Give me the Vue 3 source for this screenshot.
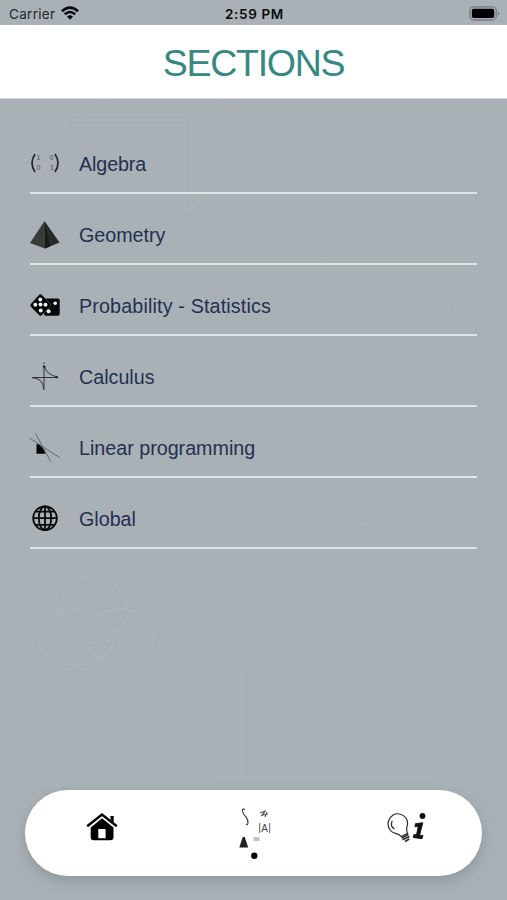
<script setup>
const sections = [
  { id: 'algebra', label: 'Algebra' },
  { id: 'geometry', label: 'Geometry' },
  { id: 'probability', label: 'Probability - Statistics' },
  { id: 'calculus', label: 'Calculus' },
  { id: 'linear', label: 'Linear programming' },
  { id: 'global', label: 'Global' },
]
</script>

<template>
  <div class="screen">
    <svg class="backdrop" viewBox="0 0 507 900" fill="none" stroke="#acb5b6" stroke-width="1.800">
      <path d="M66 120H185V212H66ZM66 120L110 99M185 120L230 99V178L185 212" opacity=".7" />
      <path d="M278 178V318M278 200L460 318M322 212V314H470M322 258L455 228V314" opacity=".3" />
      <path d="M105 380V430M260 525H465M360 460V600M290 570Q360 480 440 565" opacity=".4" />
      <circle cx="94" cy="610" r="33.500" />
      <ellipse cx="76" cy="637" rx="38" ry="28" />
      <ellipse cx="120" cy="637" rx="34" ry="28" />
      <path d="M241 672V780M238 675L241 669L244 675M210 779H488M482 777L487 779L482 781" opacity=".8" />
      <path d="M440 702H462M418 728H430" opacity=".6" />
    </svg>

    <header class="status">
      <div class="carrier">
        <span>Carrier</span>
        <svg class="wifi" viewBox="0 0 18 14">
          <g fill="none" stroke="#080b0d" stroke-width="2.500">
            <path d="M.9 5.200Q9-2 17.100 5.200" />
            <path d="M3.800 8.300Q9 3.700 14.200 8.300" />
          </g>
          <path d="M6 10.500Q9 7.900 12 10.500L9 13.700Z" fill="#080b0d" />
        </svg>
      </div>
      <span class="time">2:59 PM</span>
      <svg class="battery" viewBox="0 0 31 15">
        <rect x=".8" y=".8" width="26.400" height="13.200" rx="3.800" fill="none" stroke="#757d82" stroke-width="1.300" />
        <rect x="2.800" y="2.700" width="22.400" height="9.400" rx="1.800" fill="#000" />
        <path d="M28.700 5Q32 7.400 28.700 9.800Z" fill="#757d82" />
      </svg>
    </header>

    <div class="titlebar"><h1>SECTIONS</h1></div>

    <ul class="list">
      <li v-for="s in sections" :key="s.id" class="row">
        <svg v-if="s.id === 'algebra'" class="icon" viewBox="0 0 30 30">
          <g fill="none" stroke="#24282b" stroke-width="1.700">
            <path d="M5 5Q-1 14 5 23M25 5Q31 14 25 23" />
          </g>
          <g class="digits"><text x="6.500" y="11">1</text><text x="19.500" y="11">0</text><text x="6.500" y="20.700">0</text><text x="20" y="20.700">1</text></g>
        </svg>
        <svg v-else-if="s.id === 'geometry'" class="icon" viewBox="0 0 30 30">
          <path d="M14.500 1L0 23L15 28.500Z" fill="#393b3b" />
          <path d="M14.500 1L29.500 22.500L15 28.500Z" fill="#292b2b" />
          <path d="M14.500 1L20 26.500L15 28.500Z" fill="#181a1a" />
        </svg>
        <svg v-else-if="s.id === 'probability'" class="icon" viewBox="0 0 30 30">
          <rect x="14" y="7.500" width="15.700" height="17.300" rx="1.800" fill="#070808" />
          <path d="M11.300 3.500L20 12.300Q21.500 14 20 15.700L11.700 24.300Q10.500 25.500 9.300 24.300L1 16Q-.5 14.300 1 12.700L9 4Q10.200 2.800 11.300 3.500Z" fill="#000" stroke="#717a7b" stroke-width=".5" />
          <g fill="#edf2f2"><circle cx="10.300" cy="8.500" r="2" /><circle cx="5.300" cy="13.800" r="2" /><circle cx="10.500" cy="13.600" r="2" /><circle cx="15.500" cy="13.700" r="2" /><circle cx="10.700" cy="19.500" r="2" /><circle cx="25.200" cy="12.300" r="1.800" /><circle cx="18.600" cy="20.200" r="2" /></g>
        </svg>
        <svg v-else-if="s.id === 'calculus'" class="icon" viewBox="0 0 30 30">
          <g fill="none" stroke="#303638" stroke-width="1">
            <path d="M14 4V28M2 15.500H28" />
            <path d="M14.500 4Q16 12.500 27.500 15M2 15.700Q13 16 13.700 27" />
          </g>
          <path d="M14 .3V2M13.400 3.800H14.800V5.200H13.400ZM26 14.300L28 15.200L26 16Z" fill="#1e2426" stroke="#1e2426" stroke-width=".9" />
        </svg>
        <svg v-else-if="s.id === 'linear'" class="icon" viewBox="0 0 30 30">
          <path d="M6.500 10.700Q13 12 15.500 20.800H6.500Z" fill="#050606" />
          <g stroke="#626b6d" stroke-width="1" fill="none">
            <path d="M5.300 0L20.700 28.500M-.5 5L29.500 24.500" />
          </g>
        </svg>
        <svg v-else class="icon" viewBox="0 0 30 30">
          <g fill="none" stroke="#07090a" stroke-width="1.800">
            <circle cx="15" cy="14.200" r="11.800" />
            <ellipse cx="15" cy="14.200" rx="6.200" ry="11.800" />
            <path d="M15 2.200V26.200M3 14.200H27M5.500 7.600H24.500M5.500 20.800H24.500" />
          </g>
        </svg>
        <span class="label" :class="s.id">{{ s.label }}</span>
      </li>
    </ul>

    <nav class="tabbar">
      <div class="tab">
        <svg class="home" viewBox="0 0 32 30">
          <path d="M1.200 14.300L16 2.500L30.800 14.300" fill="none" stroke="#000" stroke-width="2.500" />
          <path d="M24.500 4H27.700V10.500L24.500 8Z" />
          <path fill-rule="evenodd" d="M16 6.200L27.500 15.500V25.500Q27.500 28.300 24.500 28.300H7.500Q4.700 28.300 4.700 25.500V15.500ZM12.300 17V26.300H19.600V17Z" />
        </svg>
      </div>
      <div class="tab">
        <svg class="math" viewBox="0 0 36 54">
          <path d="M5.700 2Q3.500-.5 3.400 3Q3.700 5.500 7 9Q9.300 11.500 8.900 15.500Q8.600 17.500 7 15.800" fill="none" stroke="#444" stroke-width="1.200" />
          <path d="M21 5L26 3L24 7L29 6M22 8L25.500 4M26 9L28 4" fill="none" stroke="#555" stroke-width="1.100" />
          <path d="M20.700 15V25M30.700 15V25" stroke="#555" stroke-width=".9" />
          <text x="22.200" y="23.500" class="det">A</text>
          <path d="M3.700 29H5.700L9.200 39.500H.3Z" fill="#222" />
          <path d="M14.500 30H20.500M14.500 32H20.500" stroke="#888" stroke-width="1.100" />
          <circle cx="15.300" cy="47.700" r="3.200" />
        </svg>
      </div>
      <div class="tab">
        <svg class="info" viewBox="0 0 40 32">
          <g fill="none" stroke="#292929" stroke-width="1.200">
            <path d="M14 24.500Q12.500 22.500 9.500 21.700C3 20.500 0 14.500 1.500 9C3.500 3.500 8 1 12.500 2C18 3 21.200 7.500 20.500 12.500C20 15.500 18.500 16.500 20.500 21.500Z" />
            <path d="M7.500 17C4 15 4 11.500 5.200 9" />
            <path d="M14.500 26L21.500 22.500M15.500 27.800L22.500 24.500M18 29.500L22.300 27" stroke-width="1.500" />
          </g>
          <g fill="#111">
            <circle cx="35.500" cy="4" r="2.900" />
            <path d="M28.400 11.700L35.800 10.700L32.600 23.200L36 23.500L35 26.700L26.200 25.500L27 22.500L29.500 23L31.200 14.500L28 14.700Z" stroke="#111" stroke-width=".9" stroke-linejoin="round" />
          </g>
        </svg>
      </div>
    </nav>
  </div>
</template>

<style>
body { margin: 0; }
</style>

<style scoped>
.screen {
  position: relative;
  display: flex;
  flex-direction: column;
  box-sizing: border-box;
  width: 507px;
  height: 900px;
  overflow: hidden;
  background: #a9b1b7;
  font-family: "Liberation Sans", Arial, sans-serif;
}
.backdrop { position: absolute; inset: 0; width: 507px; height: 900px; }
.status {
  position: relative;
  display: grid;
  grid-template-columns: 1fr auto 1fr;
  align-items: center;
  height: 25px;
  padding: 2px 7px 0 9px;
  box-sizing: border-box;
  font-family: Inter, sans-serif;
  color: #080b0d;
}
.carrier { display: flex; align-items: center; gap: 6px; font-size: 13.500px; color: #23282b; letter-spacing: 0.300px; }
.wifi { width: 18px; height: 14px; margin-top: -1px; }
.time { font-size: 13.500px; font-weight: 600; letter-spacing: 0.650px; }
.battery { width: 31px; height: 15px; justify-self: end; margin-top: -1px; }
.titlebar {
  position: relative;
  display: flex;
  align-items: center;
  justify-content: center;
  height: 74px;
  padding-top: 3px;
  box-sizing: border-box;
  background: #fff;
  border-bottom: 1px solid #d3d8db;
}
h1 { margin: 0; font-size: 37.500px; font-weight: 400; line-height: 44px; letter-spacing: -1.300px; color: #378783; }
.list { position: relative; list-style: none; margin: 0; padding: 24.400px 30px 0; }
.row {
  display: flex;
  align-items: flex-end;
  gap: 19px;
  height: 70.900px;
  box-sizing: border-box;
  padding-bottom: 13px;
  border-bottom: 2px solid #dce4e4;
}
.icon { width: 30px; height: 30px; flex: none; overflow: visible; }
.digits { font: 7px "Liberation Sans", sans-serif; fill: #4c5356; }
.label { font-size: 19.700px; line-height: 30px; color: #23304f; white-space: nowrap; }
.label.probability { letter-spacing: 0.160px; }
.label.algebra { letter-spacing: -0.100px; }
.tabbar {
  position: relative;
  display: grid;
  grid-template-columns: repeat(3, 1fr);
  align-items: center;
  height: 85.500px;
  margin: auto 25px 24.500px;
  border-radius: 43px;
  background: #fff;
  box-shadow: 0 5px 13px rgba(120, 137, 135, 0.6);
}
.tab { display: flex; justify-content: center; }
.home { width: 32px; height: 30px; margin: -11px 0 0 1px; }
.math { width: 36px; height: 54px; margin: 5px 0 0 7px; }
.info { width: 40px; height: 32px; margin: -10px 0 0 2px; }
.det { font: 10px "Liberation Sans", sans-serif; fill: #444; }
</style>
